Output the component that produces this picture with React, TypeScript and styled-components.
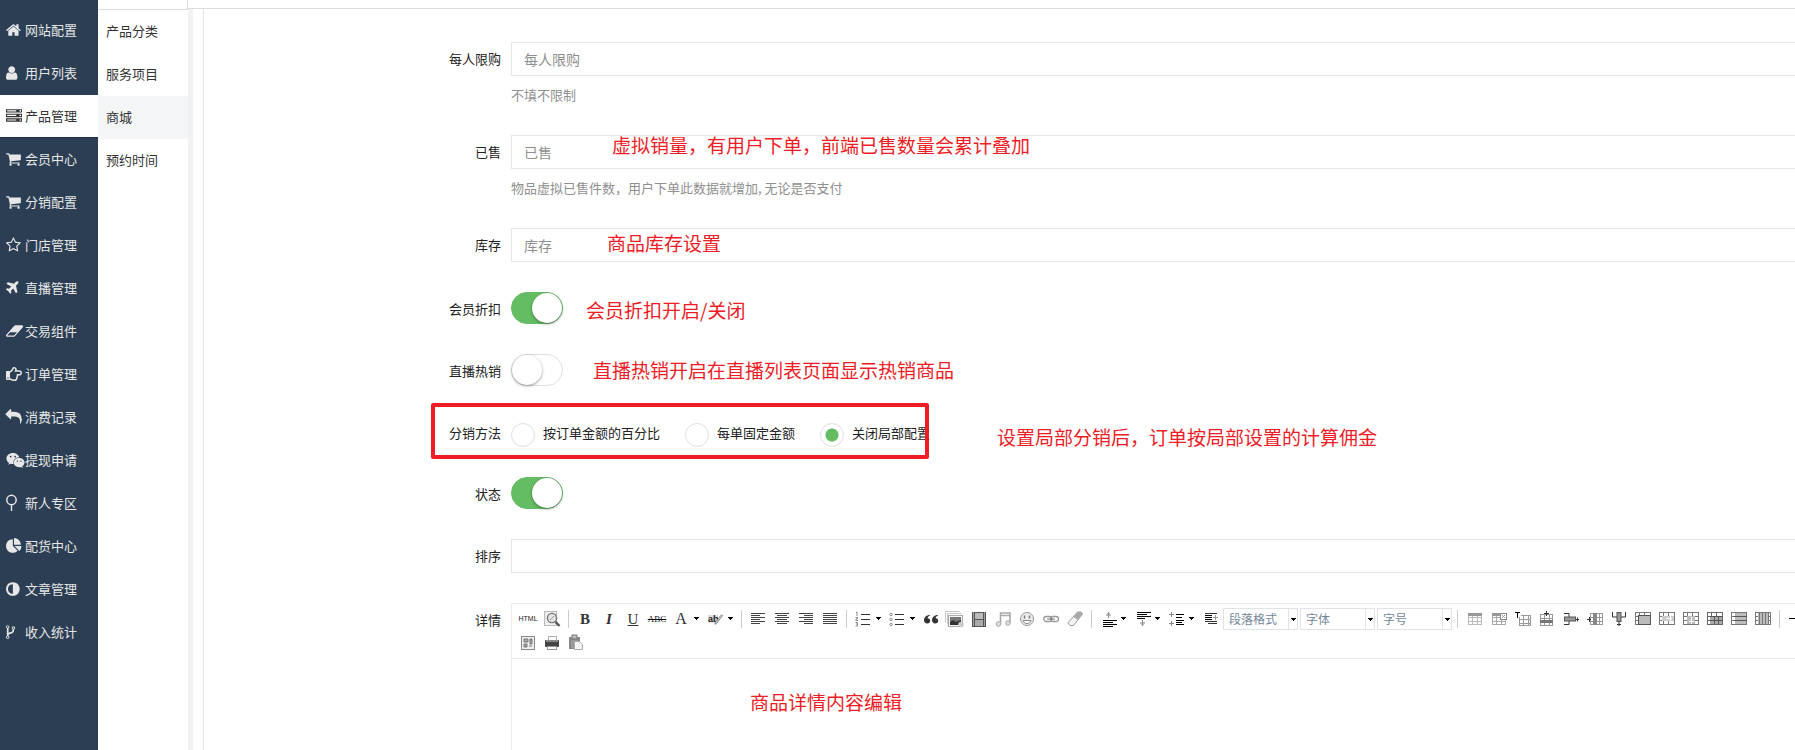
import React from 'react';
import styled, { createGlobalStyle } from 'styled-components';
import { FaRegHandPointRight, FaWeixin } from 'react-icons/fa';

const GlobalStyle = createGlobalStyle`
  * { box-sizing: border-box; }
  html, body, #root { height: 100%; }
  body {
    margin: 0;
    background: #fff;
    color: #222;
    font-family: "Noto Sans CJK SC", sans-serif;
    font-size: 13px;
  }
  input, select, button { font-family: inherit; }
`;

const Page = styled.div`
  display: flex;
  height: 100vh;
  overflow: hidden;
`;

const Sidebar = styled.nav`
  flex: 0 0 98px;
  padding-top: 9px;
  background: #2b3e53;
`;

const NavLink = styled.a<{ $active?: boolean }>`
  display: flex;
  align-items: center;
  height: 43px;
  padding-left: 6px;
  border-bottom: 1px solid ${(p) => (p.$active ? '#1f2e40' : 'transparent')};
  background: ${(p) => (p.$active ? '#fff' : 'transparent')};
  color: ${(p) => (p.$active ? '#333' : '#e7e7e7')};
  text-decoration: none;
  white-space: nowrap;
`;

const NavIcon = styled.span<{ $wide?: boolean }>`
  display: flex;
  flex: 0 0 19px;
  svg {
    flex: none;
    overflow: visible;
    width: ${(p) => (p.$wide ? 19 : 16)}px;
    height: ${(p) => (p.$wide ? 19 : 16)}px;
    fill: currentColor;
  }
`;

const NavText = styled.span`
  padding-bottom: 2px;
`;

const SubMenu = styled.nav`
  flex: 0 0 90px;
`;

const SubHead = styled.div`
  height: 10px;
  border-bottom: 1px solid #d9dce1;
  border-right: 1px solid #d9dce1;
`;

const SubLink = styled.a<{ $active?: boolean }>`
  display: block;
  height: 43px;
  padding-left: 8px;
  line-height: 41px;
  background: ${(p) => (p.$active ? '#f4f5f7' : '#fff')};
  color: #333;
  text-decoration: none;
`;

const Main = styled.main`
  display: flex;
  flex: 1;
  flex-direction: column;
  min-width: 0;
  overflow: hidden;
`;

const TopLine = styled.div`
  flex: none;
  height: 9px;
  border-bottom: 1px solid #d9dce1;
`;

const Gutter = styled.div`
  display: flex;
  flex: 1;
  min-height: 0;
  padding-left: 10px;
  border-left: 5px solid #f1f1f1;
`;

const Form = styled.form`
  flex: 1;
  min-width: 0;
  margin-right: -24px;
  padding-top: 33px;
  border-left: 1px solid #e5e5e5;
`;

const Row = styled.div`
  display: flex;
  position: relative;
  margin-bottom: 30px;
`;

const labelStyle = `
  flex: 0 0 297px;
  margin-right: 10px;
  line-height: 20px;
  padding-top: 7px;
  text-align: right;
`;
const Label = styled.label`${labelStyle}`;
const Caption = styled.span`${labelStyle}`;

const Field = styled.div`
  position: relative;
  flex: 1;
  min-width: 0;
`;

const TextInput = styled.input`
  display: block;
  width: 100%;
  height: 34px;
  padding: 0 12px;
  border: 1px solid #e5e6e7;
  background: #fff;
  font-size: 14px;
  outline: none;
  &::placeholder { color: #8f8f8f; opacity: 1; }
`;

const Help = styled.p`
  margin: 0;
  padding-top: 9px;
  height: 29px;
  line-height: 19px;
  color: #8f8f8f;
`;

const Switch = styled.input`
  appearance: none;
  display: block;
  position: relative;
  width: 52px;
  height: 32px;
  margin: 0;
  border: 1px solid #dfdfdf;
  border-radius: 16px;
  background: #fff;
  &::after {
    content: "";
    position: absolute;
    top: 0;
    left: 0;
    width: 30px;
    height: 30px;
    border-radius: 50%;
    background: #fff;
    box-shadow: 0 1px 3px rgba(0, 0, 0, 0.4);
  }
  &:checked { border-color: #64bd63; background: #64bd63; }
  &:checked::after { left: 20px; }
`;

const RadioGroup = styled.div`
  display: flex;
  gap: 25px;
  height: 31px;
  padding-top: 7px;
`;

const RadioLabel = styled.label`
  display: flex;
  align-items: flex-start;
  gap: 8px;
  line-height: 20px;
  white-space: nowrap;
`;

const Radio = styled.input`
  appearance: none;
  width: 24px;
  height: 24px;
  margin: 0;
  border: 1px solid #dfdfdf;
  border-radius: 50%;
  background: #fff;
  &:checked {
    background: radial-gradient(circle, #64bd63 6px, #fff 7px);
  }
`;

const Note = styled.span<{ $x: number; $y: number }>`
  position: absolute;
  left: ${(p) => p.$x}px;
  top: ${(p) => p.$y}px;
  color: #ee1c25;
  font-size: 19px;
  line-height: 26px;
  white-space: nowrap;
  pointer-events: none;
`;

const Highlight = styled.div`
  position: absolute;
  left: 227px;
  top: -13px;
  width: 498px;
  height: 56px;
  border: 4px solid #ee1c25;
  border-radius: 2px;
  pointer-events: none;
`;

const Editor = styled.div`
  height: 200px;
  border: 1px solid #ebebeb;
`;

const Toolbar = styled.div`
  height: 55px;
  padding: 3px 4px;
  border-bottom: 1px solid #ebebeb;
  overflow: hidden;
`;

const ToolRow = styled.div`
  display: flex;
  align-items: center;
  height: 24px;
`;

const ToolGroup = styled.div`
  display: flex;
  align-items: center;
  flex: none;
  padding-left: 1px;
`;

const Tool = styled.button<{ $wide?: boolean }>`
  display: flex;
  align-items: center;
  justify-content: space-between;
  flex: none;
  width: ${(p) => (p.$wide ? 34 : 24)}px;
  height: 24px;
  padding: 0 ${(p) => (p.$wide ? 3 : 4)}px 0 4px;
  border: 0;
  background: none;
  svg { flex: none; overflow: visible; }
`;

const Divider = styled.span`
  flex: none;
  width: 1px;
  height: 18px;
  margin: 0 4px;
  background: #ccc;
`;

const Letters = styled.span<{ $size: number; $serif?: boolean; $bold?: boolean; $italic?: boolean; $line?: string; $tone?: string }>`
  flex: none;
  width: 16px;
  display: flex;
  justify-content: center;
  font-family: ${(p) => (p.$serif ? '"Liberation Serif", serif' : '"Liberation Sans", sans-serif')};
  font-size: ${(p) => p.$size}px;
  font-weight: ${(p) => (p.$bold ? 700 : 400)};
  font-style: ${(p) => (p.$italic ? 'italic' : 'normal')};
  text-decoration: ${(p) => p.$line ?? 'none'};
  color: ${(p) => p.$tone ?? '#333'};
  line-height: 18px;
`;

const Pick = styled.span`
  position: relative;
  flex: none;
  width: 75px;
  height: 22px;
  margin: 0 1px;
  border: 1px solid #e2e3e6;
  svg { position: absolute; right: 0; top: 9px; pointer-events: none; }
  &::after {
    content: "";
    position: absolute;
    right: 8px;
    top: 0;
    height: 20px;
    border-left: 1px solid #e2e3e6;
  }
`;

const PickSelect = styled.select`
  appearance: none;
  display: block;
  width: 100%;
  height: 20px;
  padding: 0 0 0 5px;
  border: 0;
  background: none;
  color: #75879b;
  font-size: 12px;
  line-height: 20px;
`;

const navIcons = {
  home: { x: 64, d: 'M1472 992v480q0 26-19 45t-45 19h-384v-384h-256v384h-384q-26 0-45-19t-19-45v-480q0-1 .5-3t.5-3l575-474 575 474q1 2 1 6zm223-69l-62 74q-8 9-21 11h-3q-13 0-21-7l-692-577-692 577q-12 8-24 7-13-2-21-11l-62-74q-8-10-7-23.5t11-21.5l719-599q32-26 76-26t76 26l244 204v-195q0-14 9-23t23-9h192q14 0 23 9t9 23v408l219 182q10 8 11 21.5t-7 23.5z' },
  user: { x: 256, d: 'M1536 1399q0 109-62.5 187t-150.5 78h-854q-88 0-150.5-78t-62.5-187q0-85 8.5-160.5t31.5-152 58.5-131 94-89 134.5-34.5q131 128 313 128t313-128q76 0 134.5 34.5t94 89 58.5 131 31.5 152 8.5 160.5zm-256-887q0 159-112.5 271.5t-271.5 112.5-271.5-112.5-112.5-271.5 112.5-271.5 271.5-112.5 271.5 112.5 112.5 271.5z' },
  server: { x: 0, d: 'M128 1408h1024v-128h-1024v128zm0-512h1024v-128h-1024v128zm1568 448q0-40-28-68t-68-28-68 28-28 68 28 68 68 28 68-28 28-68zm-1568-960h1024v-128h-1024v128zm1568 448q0-40-28-68t-68-28-68 28-28 68 28 68 68 28 68-28 28-68zm0-512q0-40-28-68t-68-28-68 28-28 68 28 68 68 28 68-28 28-68zm96 832v384h-1792v-384h1792zm0-512v384h-1792v-384h1792zm0-512v384h-1792v-384h1792z' },
  cart: { x: 64, d: 'M704 1536q0 52-38 90t-90 38-90-38-38-90 38-90 90-38 90 38 38 90zm896 0q0 52-38 90t-90 38-90-38-38-90 38-90 90-38 90 38 38 90zm128-1088v512q0 24-16.5 42.5t-40.5 21.5l-1044 122q13 60 13 70 0 16-24 64h920q26 0 45 19t19 45-19 45-45 19h-1024q-26 0-45-19t-19-45q0-11 8-31.5t16-36 21.5-40 15.5-29.5l-177-823h-204q-26 0-45-19t-19-45 19-45 45-19h256q16 0 28.5 6.5t19.5 15.5 13 24.5 8 26 5.5 29.5 4.5 26h1201q26 0 45 19t19 45z' },
  star: { x: 64, d: 'M1201 1004l306-297-422-62-189-382-189 382-422 62 306 297-73 421 378-199 377 199zm527-357q0 22-26 48l-363 354 86 500q1 7 1 20 0 50-41 50-19 0-40-12l-449-236-449 236q-22 12-40 12-21 0-31.5-14.5t-10.5-35.5q0-6 2-20l86-500-364-354q-25-27-25-48 0-37 56-46l502-73 225-455q19-41 49-41t49 41l225 455 502 73q56 9 56 46z' },
  plane: { x: 192, d: 'M1568 160q44 52 12 148t-108 172l-161 161 160 696q5 19-12 33l-128 96q-7 6-19 6-4 0-7-1-15-3-21-16l-279-508-259 259 53 194q5 17-8 31l-96 96q-9 9-23 9h-2q-15-2-24-13l-189-252-252-189q-11-7-13-23-1-13 9-25l96-97q9-9 23-9 6 0 8 1l194 53 259-259-508-279q-14-8-17-24-2-16 9-27l128-128q14-13 30-8l665 159 160-160q76-76 172-108t148 12z' },
  eraser: { x: 64, d: 'M960 1408l336-384h-768l-336 384h768zm1013-1077q15 34 9.5 71.5t-30.5 65.5l-896 1024q-38 44-96 44h-768q-38 0-69.5-20.5t-47.5-54.5q-15-34-9.5-71.5t30.5-65.5l896-1024q38-44 96-44h768q38 0 69.5 20.5t47.5 54.5z' },
  reply: { x: 0, d: 'M1792 1120q0 166-127 451-3 7-10.5 24t-13.5 30-13 22q-12 17-28 17-15 0-23.5-10t-8.5-25q0-9 2.5-26.5t2.5-23.5q5-68 5-123 0-112-19.5-200.5t-54-153.5-88-112-117.5-78-145.5-50-166.5-24.5-185-7.5h-224v256q0 26-19 45t-45 19-45-19l-512-512q-19-19-19-45t19-45l512-512q19-19 45-19t45 19 19 45v256h224q713 0 875 403 53 134 53 333z' },
  pie: { x: 0, d: 'M768 890l546 546q-106 108-247.5 168t-298.5 60q-209 0-385.5-103t-279.5-279.5-103-385.5 103-385.5 279.5-279.5 385.5-103v762zm187 6h773q0 157-60 298.5t-168 247.5zm709-128h-768v-768q209 0 385.5 103t279.5 279.5 103 385.5z' },
  adjust: { x: 128, d: 'M896 1440v-1088q-148 0-273 73t-198 198-73 273 73 273 198 198 273 73zm768-544q0 209-103 385.5t-279.5 279.5-385.5 103-385.5-103-279.5-279.5-103-385.5 103-385.5 279.5-279.5 385.5-103 385.5 103 279.5 279.5 103 385.5z' },
  fork: { x: 384, d: 'M672 1472q0-40-28-68t-68-28-68 28-28 68 28 68 68 28 68-28 28-68zm0-1152q0-40-28-68t-68-28-68 28-28 68 28 68 68 28 68-28 28-68zm640 128q0-40-28-68t-68-28-68 28-28 68 28 68 68 28 68-28 28-68zm96 0q0 52-26 96.5t-70 69.5q-2 287-226 414-67 38-203 81-128 40-169.5 71t-41.5 100v26q44 25 70 69.5t26 96.5q0 80-56 136t-136 56-136-56-56-136q0-52 26-96.5t70-69.5v-820q-44-25-70-69.5t-26-96.5q0-80 56-136t136-56 136 56 56 136q0 52-26 96.5t-70 69.5v497q54-26 154-57 55-17 87.5-29.5t70.5-31 59-39.5 40.5-51 28-69.5 8.5-91.5q-44-25-70-69.5t-26-96.5q0-80 56-136t136-56 136 56 56 136z' },
};

const Fa = ({ name }: { name: keyof typeof navIcons }) => (
  <svg viewBox={`${navIcons[name].x} 0 1792 1792`}><path d={navIcons[name].d} /></svg>
);

const PinIcon = () => (
  <svg viewBox="0 0 16 16">
    <circle cx="5.5" cy="5" r="4.7" fill="none" stroke="currentColor" strokeWidth="1.5" />
    <path d="M4.800 9.500h1.400v6.500h-1.400z" />
  </svg>
);

const navItems: { text: string; icon: React.ReactNode; active?: boolean; wide?: boolean }[] = [
  { text: '网站配置', icon: <Fa name="home" /> },
  { text: '用户列表', icon: <Fa name="user" /> },
  { text: '产品管理', icon: <Fa name="server" />, active: true },
  { text: '会员中心', icon: <Fa name="cart" /> },
  { text: '分销配置', icon: <Fa name="cart" /> },
  { text: '门店管理', icon: <Fa name="star" /> },
  { text: '直播管理', icon: <Fa name="plane" /> },
  { text: '交易组件', icon: <Fa name="eraser" /> },
  { text: '订单管理', icon: <FaRegHandPointRight /> },
  { text: '消费记录', icon: <Fa name="reply" /> },
  { text: '提现申请', icon: <FaWeixin />, wide: true },
  { text: '新人专区', icon: <PinIcon /> },
  { text: '配货中心', icon: <Fa name="pie" /> },
  { text: '文章管理', icon: <Fa name="adjust" /> },
  { text: '收入统计', icon: <Fa name="fork" /> },
];

const subItems = ['产品分类', '服务项目', '商城', '预约时间'];

/* Toolbar drawings, all on a 16 by 16 grid */
const Glyph = ({ children }: { children: React.ReactNode }) => (
  <svg width="16" height="16" viewBox="0 0 16 16" fill="none">{children}</svg>
);

const Caret = () => (
  <svg width="7" height="4" viewBox="0 0 7 4" shapeRendering="crispEdges"><path d="M1 0h5v1h-1v1h-1v1h-1v-1h-1v-1h-1z" fill="#000" /></svg>
);

const Lines = ({ rows, tone = '#333' }: { rows: number[][]; tone?: string }) => (
  <>{rows.map(([x, y, w], i) => <rect key={i} x={x} y={y} width={w} height={1} fill={tone} />)}</>
);

const align = (xs: number[][]) => (
  <Glyph><Lines rows={xs.map(([x, w], i) => [x, 2 + i * 2, w])} tone="#444" /></Glyph>
);

const full = [1, 14];

const PreviewIcon = () => (
  <Glyph>
    <rect x=".5" y=".5" width="12" height="14" fill="#eee" stroke="#bbb" />
    <circle cx="8" cy="7" r="4.6" fill="#e4e4e4" stroke="#777" strokeWidth="1.4" />
    <path d="M6 9l4-4" stroke="#999" />
    <path d="M11.500 10.800l4 4.200" stroke="#555" strokeWidth="2.400" />
  </Glyph>
);

const BrushIcon = () => (
  <svg width="16" height="16" viewBox="0 0 16 16">
    <rect x="1" y="4" width="10" height="8" fill="#ddd" />
    <text x="1" y="11" fontFamily="Liberation Sans, sans-serif" fontSize="9" fontWeight="700" fill="#222">ab</text>
    <path d="M15.500 4.500l-6 8-1.500.8.300-1.800 6-7.500z" fill="#f5f5f5" stroke="#666" strokeWidth=".8" />
  </svg>
);

const ListIcon = ({ ordered }: { ordered?: boolean }) => (
  <Glyph>
    <Lines rows={[[6, 3, 9], [6, 8, 9], [6, 13, 9]]} />
    {[3, 8, 13].map((y, i) => ordered
      ? <path key={y} d={['M1 1h1v4', 'M.5 6.500h2v1.500h-1.500v1.500h2', 'M.5 11.500h2v3.500h-2M1 13h1.500'][i]} stroke="#888" />
      : <circle key={y} cx="2" cy={y + 0.5} r="1.200" stroke="#888" />)}
  </Glyph>
);

const QuoteIcon = () => (
  <Glyph>
    {[0, 8].map((x) => (
      <path key={x} transform={`translate(${x + 1} 0)`} d="M6 4C2.500 4 0 6.200 0 9.300 0 11.300 1.300 12.500 3.200 12.500 5 12.500 6.200 11.300 6.200 9.800 6.200 8.300 5.200 7.200 3.600 7.200 3.800 5.800 4.600 5 6 4.600z" fill="#333" />
    ))}
  </Glyph>
);

const ImagesIcon = () => (
  <Glyph>
    <path d="M-1.500 11.500V.5h14M.5 13.500V2.500h14" stroke="#c4c4c4" />
    <rect x="1.500" y="4.500" width="14" height="11" fill="#f4f4f4" stroke="#aaa" />
    <rect x="3" y="6" width="11" height="8" fill="#777" />
    <path d="M3 14V11l3-2 3 2L14 9v5z" fill="#333" />
    <circle cx="14" cy="13.500" r="2.800" fill="#ccc" />
  </Glyph>
);

const FilmIcon = () => (
  <Glyph>
    <rect x="1" y="1" width="14" height="15" fill="#555" />
    <rect x="4" y="2" width="8" height="6" fill="#bbb" />
    <rect x="4" y="9" width="8" height="6" fill="#aaa" />
    <path d="M2.500 1.500v14M13.500 1.500v14" stroke="#eee" strokeDasharray="1 1" />
  </Glyph>
);

const MusicIcon = () => (
  <Glyph>
    <path d="M5.500 13V2h9.500v10M5.500 4.500h9.500" stroke="#aaa" strokeWidth="1.600" />
    <circle cx="3.500" cy="13" r="2.300" fill="#ddd" stroke="#aaa" />
    <circle cx="13" cy="12" r="2.300" fill="#ddd" stroke="#aaa" />
  </Glyph>
);

const SmileIcon = () => (
  <Glyph>
    <circle cx="8" cy="8" r="6.500" fill="#ececec" stroke="#999" />
    <path d="M5.500 4.500v3M10.500 4.500v3" stroke="#777" strokeWidth="1.400" />
    <path d="M4 9.500h8c-.5 4-7.500 4-8 0z" fill="#fff" stroke="#888" />
  </Glyph>
);

const LinkIcon = () => (
  <Glyph>
    <rect x=".8" y="5.500" width="8" height="5" rx="2.500" stroke="#999" strokeWidth="1.300" />
    <rect x="7.500" y="5.500" width="8" height="5" rx="2.500" stroke="#999" strokeWidth="1.300" />
    <path d="M4 8h8" stroke="#777" />
  </Glyph>
);

const RubberIcon = () => (
  <Glyph>
    <path d="M10.500 1h3.500l1.500 2-9 11.500H3L.8 12z" fill="#f2f2f2" stroke="#999" />
    <path d="M10.500 1h3.500l1.500 2-4.500 5.800L6.500 6z" fill="#aaa" />
  </Glyph>
);

const SpaceBefore = () => (
  <Glyph>
    <path d="M8.500 1v6M6 4h5M7.500 2.500h2" stroke="#888" />
    <Lines rows={[[3, 9, 14], [3, 11, 10], [3, 13, 14], [3, 15, 10]]} tone="#000" />
  </Glyph>
);

const SpaceAfter = () => (
  <Glyph>
    <Lines rows={[[3, 1, 14], [3, 3, 10], [3, 5, 14], [3, 7, 8]]} tone="#000" />
    <path d="M8.500 9v6M6 12h5M7.500 13.500h2" stroke="#888" />
  </Glyph>
);

const LineHeightIcon = () => (
  <Glyph>
    <path d="M3.500 1v5M1 3.500h5M3.500 10v5M1 12.500h5" stroke="#888" />
    <Lines rows={[[8, 3, 8], [8, 6, 6], [8, 9, 8], [8, 11, 6], [8, 13, 8]]} tone="#000" />
  </Glyph>
);

const IndentIcon = () => (
  <Glyph>
    <Lines rows={[[3, 2, 12], [3, 10, 12], [6, 12, 9]]} tone="#333" />
    <Lines rows={[[3, 4, 7], [3, 6, 7], [3, 8, 7]]} tone="#000" />
    <path d="M11 6.500h5M13.500 4v5" stroke="#999" />
  </Glyph>
);

/* A table outline with any of its bands or marks on top */
const Grid = ({ x = 1, y = 2, w = 14, h = 12, tone = '#999', children }: { x?: number; y?: number; w?: number; h?: number; tone?: string; children?: React.ReactNode }) => (
  <Glyph>
    <g shapeRendering="crispEdges">
      <rect x={x + 0.5} y={y + 0.5} width={w - 1} height={h - 1} stroke={tone} />
      <path d={`M${x} ${y + 4.5}h${w}M${x} ${y + 8.5}h${w}M${x + 4.5} ${y}v${h}M${x + 9.5} ${y}v${h}`} stroke={tone} />
      {children}
    </g>
  </Glyph>
);

const tableIcons: [string, React.ReactNode][] = [
  ['插入表格', <Grid tone="#bbb"><rect x="1" y="2" width="14" height="3" fill="#999" /></Grid>],
  ['删除表格', <Grid tone="#aaa"><rect x="1" y="2" width="9" height="3" fill="#999" /><rect x="9.500" y="2.500" width="6" height="6" fill="#fff" stroke="#888" /><path d="M11 4l3 3M14 4l-3 3" stroke="#999" /></Grid>],
  ['表格前插入行', <Grid x={4} y={4} w={12} h={11} tone="#999"><rect x="0" y="0" width="6" height="6" fill="#fff" /><path d="M0 1.500h5M2.500 1v6" stroke="#000" /></Grid>],
  ['前插入行', <Grid y={3} w={13}><rect x="1" y="9" width="13" height="3" fill="#777" /><path d="M7.500 0v5M5 2.500h5" stroke="#333" /></Grid>],
  ['删除行', <Glyph><path d="M1 2.500h5v11H1" stroke="#333" /><rect x="1.500" y="6" width="11" height="4" fill="#999" stroke="#555" /><path d="M13 8.500h3M14.500 6.500v4" stroke="#333" /></Glyph>],
  ['前插入列', <Grid x={3} w={13}><rect x="6" y="2" width="4" height="12" fill="#888" /><path d="M0 8.500h4M2.500 6v5" stroke="#333" /></Grid>],
  ['删除列', <Glyph><path d="M1.500 1v5h13V1" stroke="#333" /><rect x="6" y="1.500" width="4" height="9" fill="#999" stroke="#555" /><path d="M8 11v4M6 13.500h4" stroke="#333" /></Glyph>],
  ['合并多个单元格', <Grid x={0} y={1} w={16} h={13} tone="#777"><rect x="3.500" y="4.500" width="12" height="9" fill="#bbb" stroke="#555" /></Grid>],
  ['右合并单元格', <Grid x={0} y={1} w={16} h={13} tone="#777"><rect x="3" y="5" width="12" height="5" fill="#ccc" /><path d="M7 7.500h6M11.500 5v5" stroke="#fff" /></Grid>],
  ['下合并单元格', <Grid x={0} y={1} w={16} h={13} tone="#777"><rect x="4" y="5" width="8" height="8" fill="#bbb" /><path d="M8.500 6v7M6 10.500h5" stroke="#fff" /></Grid>],
  ['完全拆分单元格', <Grid x={0} y={1} w={16} h={13} tone="#666"><rect x="3" y="5" width="12" height="8" fill="#aaa" /><path d="M3 5.500h13M3 9.500h13M7.500 5v8M11.500 5v8" stroke="#555" /></Grid>],
  ['拆分成行', <Grid x={0} y={1} w={16} h={13} tone="#777"><rect x="4" y="2" width="11" height="11" fill="#bbb" /><path d="M3 5.500h13M3 9.500h13" stroke="#555" /></Grid>],
  ['拆分成列', <Grid x={0} y={1} w={16} h={13} tone="#777"><rect x="3" y="2" width="10" height="11" fill="#bbb" /><path d="M4.500 1v12M7.500 1v12M10.500 1v12M13.500 1v12" stroke="#777" /></Grid>],
];

const MapIcon = () => (
  <Glyph>
    <rect x="1.500" y="1.500" width="13" height="13" fill="#eee" stroke="#888" />
    <path d="M4 4h4v3H4zM10 4h2v5h-2zM4 9h3v3H4zM9 11h3" fill="#aaa" stroke="#777" />
  </Glyph>
);

const PrintIcon = () => (
  <Glyph>
    <path d="M4.500 5V1.500h8V5" fill="#fff" stroke="#aaa" />
    <rect x="1" y="5" width="14" height="7" rx="1" fill="#444" />
    <rect x="2" y="5" width="12" height="2" fill="#888" />
    <rect x="3.500" y="11.500" width="9" height="3" fill="#fff" stroke="#999" />
  </Glyph>
);

const PasteIcon = () => (
  <Glyph>
    <rect x="1" y="2" width="11" height="12" fill="#888" />
    <rect x="4" y="0" width="5" height="4" fill="#bbb" stroke="#777" />
    <rect x="3" y="5" width="7" height="8" fill="#999" />
    <path d="M6.500 6.500h5l3 3v5h-8z" fill="#f6f6f6" stroke="#aaa" />
  </Glyph>
);

const ToolButton = ({ title, menu, children }: { title: string; menu?: boolean; children: React.ReactNode }) => (
  <Tool type="button" aria-label={title} $wide={menu}>{children}{menu && <Caret />}</Tool>
);

const Picker = ({ text }: { text: string }) => (
  <Pick><PickSelect aria-label={text}><option>{text}</option></PickSelect><Caret /></Pick>
);

const EditorToolbar = () => (
  <Toolbar>
    <ToolRow>
      <ToolButton title="源代码"><Letters $size={7} $tone="#222">HTML</Letters></ToolButton>
      <ToolButton title="预览"><PreviewIcon /></ToolButton>
      <Divider />
      <ToolButton title="加粗"><Letters $size={15} $serif $bold>B</Letters></ToolButton>
      <ToolButton title="斜体"><Letters $size={15} $serif $bold $italic>I</Letters></ToolButton>
      <ToolButton title="下划线"><Letters $size={15} $serif $line="underline">U</Letters></ToolButton>
      <ToolButton title="删除线"><Letters $size={9} $serif $line="line-through" $tone="#111">ABC</Letters></ToolButton>
      <ToolButton title="字体颜色" menu><Letters $size={16} $serif>A</Letters></ToolButton>
      <ToolButton title="背景色" menu><BrushIcon /></ToolButton>
      <Divider />
      <ToolButton title="居左对齐">{align([full, [1, 9], full, [1, 9], full, [1, 9]])}</ToolButton>
      <ToolButton title="居中对齐">{align([full, [3, 10], full, [3, 10], full, [3, 10]])}</ToolButton>
      <ToolButton title="居右对齐">{align([full, [6, 9], full, [6, 9], full, [6, 9]])}</ToolButton>
      <ToolButton title="两端对齐">{align([full, full, full, full, full, full])}</ToolButton>
      <Divider />
      <ToolButton title="有序列表" menu><ListIcon ordered /></ToolButton>
      <ToolButton title="无序列表" menu><ListIcon /></ToolButton>
      <ToolButton title="引用"><QuoteIcon /></ToolButton>
      <ToolButton title="多图上传"><ImagesIcon /></ToolButton>
      <ToolButton title="视频"><FilmIcon /></ToolButton>
      <ToolButton title="音乐"><MusicIcon /></ToolButton>
      <ToolButton title="表情"><SmileIcon /></ToolButton>
      <ToolButton title="超链接"><LinkIcon /></ToolButton>
      <ToolButton title="清除格式"><RubberIcon /></ToolButton>
      <Divider />
      <ToolButton title="段前距" menu><SpaceBefore /></ToolButton>
      <ToolButton title="段后距" menu><SpaceAfter /></ToolButton>
      <ToolButton title="行间距" menu><LineHeightIcon /></ToolButton>
      <ToolButton title="首行缩进"><IndentIcon /></ToolButton>
      <Picker text="段落格式" />
      <Picker text="字体" />
      <Picker text="字号" />
      <Divider />
      <ToolGroup>
        {tableIcons.map(([title, icon]) => <ToolButton key={title} title={title}>{icon}</ToolButton>)}
        <Divider />
        <ToolButton title="分隔线"><Glyph><Lines rows={[[1, 7, 14]]} tone="#000" /></Glyph></ToolButton>
      </ToolGroup>
    </ToolRow>
    <ToolRow>
      <ToolButton title="地图"><MapIcon /></ToolButton>
      <ToolButton title="打印"><PrintIcon /></ToolButton>
      <ToolButton title="粘贴"><PasteIcon /></ToolButton>
    </ToolRow>
  </Toolbar>
);

export default function App() {
  return (
    <>
      <GlobalStyle />
      <Page>
        <Sidebar>
          {navItems.map((item) => (
            <NavLink key={item.text} href="#" $active={item.active}>
              <NavIcon $wide={item.wide}>{item.icon}</NavIcon>
              <NavText>{item.text}</NavText>
            </NavLink>
          ))}
        </Sidebar>
        <SubMenu>
          <SubHead />
          {subItems.map((text) => <SubLink key={text} href="#" $active={text === '商城'}>{text}</SubLink>)}
        </SubMenu>
        <Main>
          <TopLine />
          <Gutter>
            <Form>
              <Row>
                <Label htmlFor="limit">每人限购</Label>
                <Field>
                  <TextInput id="limit" placeholder="每人限购" />
                  <Help>不填不限制</Help>
                </Field>
              </Row>
              <Row>
                <Label htmlFor="sold">已售</Label>
                <Field>
                  <TextInput id="sold" placeholder="已售" />
                  <Help>物品虚拟已售件数，用户下单此数据就增加, 无论是否支付</Help>
                  <Note $x={101} $y={-3}>虚拟销量，有用户下单，前端已售数量会累计叠加</Note>
                </Field>
              </Row>
              <Row>
                <Label htmlFor="stock">库存</Label>
                <Field>
                  <TextInput id="stock" placeholder="库存" />
                  <Note $x={96} $y={2}>商品库存设置</Note>
                </Field>
              </Row>
              <Row>
                <Label htmlFor="discount">会员折扣</Label>
                <Field>
                  <Switch id="discount" type="checkbox" role="switch" defaultChecked />
                  <Note $x={75} $y={5}>会员折扣开启/关闭</Note>
                </Field>
              </Row>
              <Row>
                <Label htmlFor="hot">直播热销</Label>
                <Field>
                  <Switch id="hot" type="checkbox" role="switch" />
                  <Note $x={82} $y={3}>直播热销开启在直播列表页面显示热销商品</Note>
                </Field>
              </Row>
              <Row>
                <Caption id="method">分销方法</Caption>
                <Field>
                  <RadioGroup role="radiogroup" aria-labelledby="method">
                    <RadioLabel><Radio type="radio" name="method" />按订单金额的百分比</RadioLabel>
                    <RadioLabel><Radio type="radio" name="method" />每单固定金额</RadioLabel>
                    <RadioLabel><Radio type="radio" name="method" defaultChecked />关闭局部配置</RadioLabel>
                  </RadioGroup>
                  <Note $x={486} $y={8}>设置局部分销后，订单按局部设置的计算佣金</Note>
                </Field>
                <Highlight />
              </Row>
              <Row>
                <Label htmlFor="status">状态</Label>
                <Field><Switch id="status" type="checkbox" role="switch" defaultChecked /></Field>
              </Row>
              <Row>
                <Label htmlFor="order">排序</Label>
                <Field><TextInput id="order" /></Field>
              </Row>
              <Row>
                <Caption>详情</Caption>
                <Field>
                  <Editor><EditorToolbar /></Editor>
                  <Note $x={239} $y={86}>商品详情内容编辑</Note>
                </Field>
              </Row>
            </Form>
          </Gutter>
        </Main>
      </Page>
    </>
  );
}
